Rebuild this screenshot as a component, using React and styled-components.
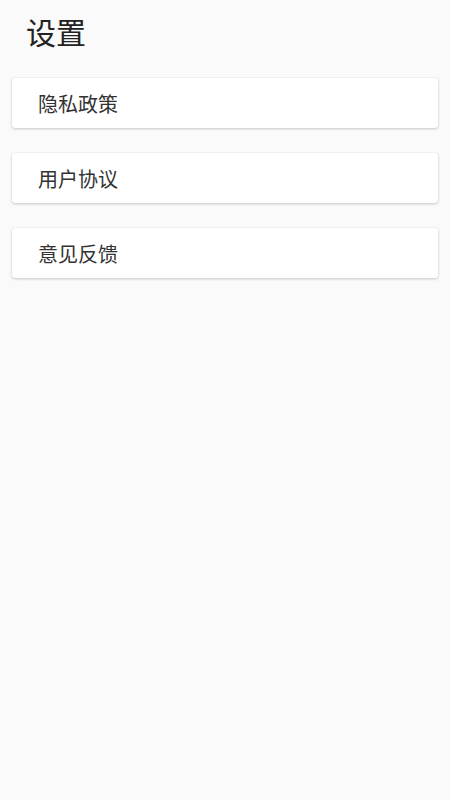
import React from 'react';
import styled, { createGlobalStyle } from 'styled-components';

const GlobalStyle = createGlobalStyle`
  html, body {
    margin: 0;
    padding: 0;
    background: #fafafa;
  }
  body {
    font-family: Roboto, "Noto Sans CJK SC", sans-serif;
  }
`;

const items = ['隐私政策', '用户协议', '意见反馈'];

const App = () => {
  return (
    <Page>
      <GlobalStyle />
      <Title>设置</Title>
      <List>
        {items.map((item) => (
          <Card key={item}>{item}</Card>
        ))}
      </List>
    </Page>
  );
};

export default App;

const Page = styled.div`
  min-height: 800px;
  background: #fafafa;
  padding: 12px 12px 0 12px;
  box-sizing: border-box;
`;

const Title = styled.div`
  font-size: 30px;
  line-height: 44px;
  color: #222222;
  padding-left: 14px;
`;

const List = styled.div`
  display: flex;
  flex-direction: column;
  gap: 25px;
  margin-top: 22px;
`;

const Card = styled.div`
  height: 50px;
  display: flex;
  align-items: center;
  padding-left: 26px;
  background: #ffffff;
  border-radius: 3px;
  box-shadow: 0 1px 3px rgba(0, 0, 0, 0.2), 0 0 1px rgba(0, 0, 0, 0.12);
  font-size: 20px;
  color: #333333;
`;
